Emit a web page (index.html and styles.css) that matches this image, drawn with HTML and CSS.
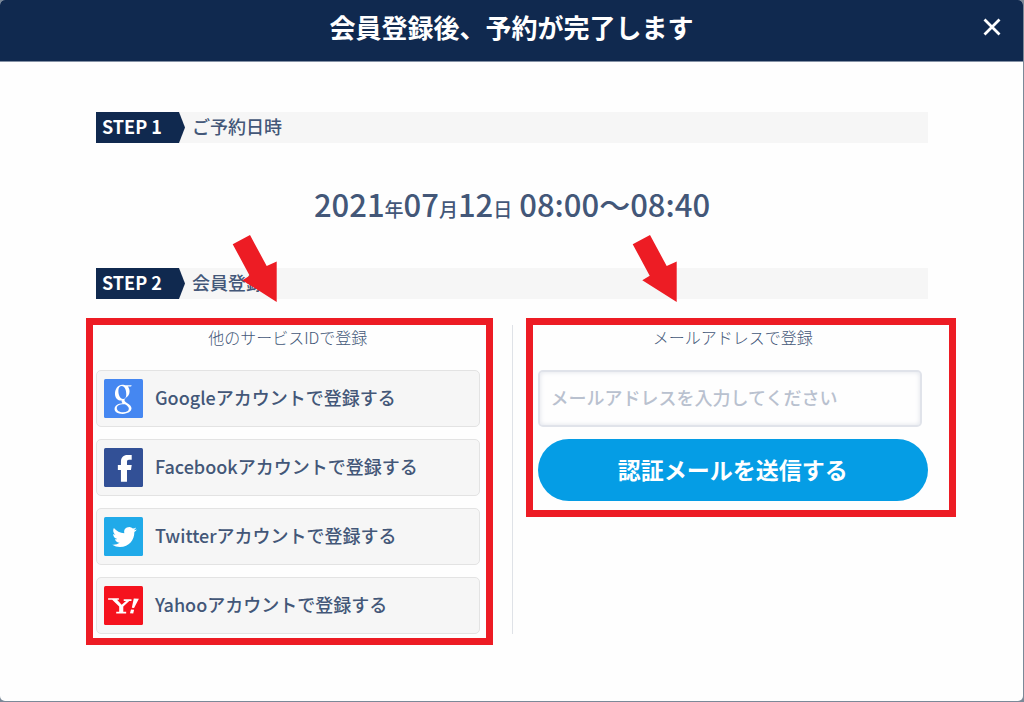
FILE: index.html
```html
<!DOCTYPE html>
<html lang="ja">
<head>
<meta charset="utf-8">
<meta name="viewport" content="width=device-width, initial-scale=1">
<title>会員登録</title>
<link rel="stylesheet" href="styles.css">
</head>
<body>
<main class="modal">
  <header class="modal-header">
    <h1 class="modal-title">会員登録後、予約が完了します</h1>
    <button class="close" type="button" aria-label="閉じる">
      <svg width="18" height="18" viewBox="0 0 18 18"><path d="M1.500 1.500l15 15M16.500 1.500l-15 15" fill="none" stroke="currentColor" stroke-width="2.800"/></svg>
    </button>
  </header>
  <div class="modal-body">
    <h2 class="step"><span class="step-tag">STEP 1</span><span class="step-name">ご予約日時</span></h2>
    <p class="date">2021<small>年</small>07<small>月</small>12<small>日</small> 08:00～08:40</p>
    <h2 class="step"><span class="step-tag">STEP 2</span><span class="step-name">会員登録</span></h2>
    <div class="columns">
      <section class="column column-social">
        <h3 class="column-title">他のサービスIDで登録</h3>
        <div class="socials">
          <button class="social" type="button">
            <svg class="logo" viewBox="0 0 38 38"><rect width="38" height="38" rx="1.500" fill="#4587f1"/><path fill="#fff" fill-rule="evenodd" d="M17.800 5.500c1.600 0 2.700.5 3.700.5H27l-.6 1.400h-3.200c1.100 1.300 1.700 2.800 1.700 4.700 0 3-1.500 4.700-3.200 6-1.400 1.100-1.700 1.700-1.700 2.500 0 1 .8 1.600 2.400 2.700 2.700 1.800 4.400 3.100 4.400 5.300 0 3-3.400 5.400-8.700 5.400-5 0-7.800-1.900-7.800-4.700 0-3.300 3.300-5.300 7.800-5.600-.8-.9-1.100-1.600-.8-2.700-4 .2-6.600-2.500-6.600-6.700 0-5 3.100-8.800 7.100-8.800zM17.300 6.900c-2 0-3.300 1.700-3.300 4.600 0 4.400 1.800 8 4.600 8 2.100 0 3.100-1.800 3.100-4.500 0-4.500-1.600-8.100-4.400-8.100zM19 24.700c-4 0-6.500 1.400-6.500 3.900 0 2.300 2.300 3.900 6.100 3.900 3.600 0 5.600-1.400 5.600-3.500 0-1.800-1.400-2.700-3.800-4.300z"/></svg>
            <span class="social-name">Googleアカウントで登録する</span>
          </button>
          <button class="social" type="button">
            <svg class="logo" viewBox="0 0 38 38"><rect width="38" height="38" rx="1.500" fill="#325096"/><path fill="#fff" d="M16.500 33V21.500h-3v-5h3v-3.200c0-4.300 2.500-6.600 6.300-6.600H27v4.700h-2.700c-1.400 0-1.900.7-1.900 1.900v3.200H27l-.7 5h-3.900V33z"/></svg>
            <span class="social-name">Facebookアカウントで登録する</span>
          </button>
          <button class="social" type="button">
            <svg class="logo" viewBox="0 0 38 38"><rect width="38" height="38" rx="1.500" fill="#20aae9"/><path transform="translate(8 7.500)" fill="#fff" d="M23.953 4.570a10 10 0 01-2.825.775 4.958 4.958 0 002.163-2.723c-.951.555-2.005.959-3.127 1.184a4.920 4.920 0 00-8.384 4.482C7.690 8.095 4.067 6.130 1.640 3.162a4.822 4.822 0 00-.666 2.475c0 1.710.870 3.213 2.188 4.096a4.904 4.904 0 01-2.228-.616v.060a4.923 4.923 0 003.946 4.827 4.996 4.996 0 01-2.212.085 4.936 4.936 0 004.604 3.417 9.867 9.867 0 01-6.102 2.105c-.390 0-.779-.023-1.170-.067a13.995 13.995 0 007.557 2.209c9.053 0 13.998-7.496 13.998-13.985 0-.210 0-.420-.015-.630A9.935 9.935 0 0024 4.590z"/></svg>
            <span class="social-name">Twitterアカウントで登録する</span>
          </button>
          <button class="social" type="button">
            <svg class="logo" viewBox="0 0 38 38"><rect width="38" height="38" rx="1.500" fill="#f5121d"/><path fill="#fff" d="M4 12h10.500v1.500H12.700l4.500 4.800 4.300-3.800h-2.300V13h7.600v1.500h-2.200L18.800 20v5h2.800v1.800h-9.700V25h2.900v-5L8 13.500H4zM29 12.300l5 .2-4.700 9-2.200-.2zM26.300 23l3 .2-.8 3.500-3.200-.2z"/></svg>
            <span class="social-name">Yahooアカウントで登録する</span>
          </button>
        </div>
        <div class="frame frame-social"></div>
        <svg class="arrow arrow-social" viewBox="0 0 45 67"><path d="M.7 9.200L18 0l16.700 31 10-4.500v40.500L10.300 45.200l7.400-4.500z"/></svg>
      </section>
      <div class="divider"></div>
      <form class="column column-mail">
        <label class="column-title" for="mail">メールアドレスで登録</label>
        <input class="mail" id="mail" type="email" placeholder="メールアドレスを入力してください">
        <button class="submit" type="button">認証メールを送信する</button>
        <div class="frame frame-mail"></div>
        <svg class="arrow arrow-mail" viewBox="0 0 45 67"><path d="M.7 9.200L18 0l16.700 31 10-4.500v40.500L10.300 45.200l7.400-4.500z"/></svg>
      </form>
    </div>
  </div>
</main>
</body>
</html>
```
FILE: styles.css
```css
* { box-sizing: border-box; }
body {
  margin: 0;
  background: #7b8998;
  color: #435778;
  font-family: "Noto Sans CJK JP", sans-serif;
  font-weight: 500;
}
h1, h2, h3, p { margin: 0; font-weight: 500; }
button, input { font: inherit; color: inherit; }
button { cursor: pointer; }
.modal {
  margin: 0 1px 1px 0;
  min-height: calc(100vh - 1px);
  background: #fefefe;
  border-radius: 5px;
  overflow: hidden;
}
.modal-header {
  display: flex;
  align-items: center;
  justify-content: center;
  position: relative;
  padding: 7px 60px 14px;
  background: #10294f;
  border-bottom: 1px solid #8491a5;
  color: #fff;
}
.modal-title { font-size: 26px; line-height: 40px; font-weight: 700; }
.close {
  position: absolute;
  right: 18px;
  top: 14px;
  display: flex;
  padding: 4px;
  border: 0;
  background: none;
}
.modal-body { padding: 50px 95px 60px 96px; }
.step {
  display: flex;
  align-items: center;
  background: #f6f6f6;
  font-size: 18px;
  line-height: 29px;
}
.step-tag {
  width: 89px;
  padding: 0 0 2px 6px;
  background: #10294f;
  clip-path: polygon(0 0, 83px 0, 100% 50%, 83px 100%, 0 100%);
  color: #fff;
  font-weight: 700;
}
.step-name { padding: 0 0 2px 7px; }
.date {
  padding: 37px 0 40px;
  font-size: 31px;
  line-height: 48px;
  text-align: center;
}
.date small { font-size: 19px; line-height: 1; }
.columns {
  display: grid;
  grid-template-columns: 1fr 1px 1fr;
  align-items: start;
  margin-top: 26px;
}
.column { position: relative; display: flex; flex-direction: column; }
.column-social { margin-right: 32px; }
.column-mail { margin-left: 25px; }
.divider { align-self: stretch; background: #dfe2e7; }
.column-title {
  margin-bottom: 21px;
  font-size: 16px;
  line-height: 24px;
  font-weight: 300;
  text-align: center;
}
.socials { display: grid; gap: 12px; }
.social {
  display: flex;
  align-items: center;
  gap: 12px;
  height: 57px;
  padding: 0 7px;
  border: 1px solid #e3e3e3;
  border-radius: 5px;
  background: #f6f6f6;
  font-size: 18px;
  text-align: left;
}
.social-name { padding-bottom: 3px; }
.logo { width: 39px; height: 39px; flex: none; }
.mail {
  height: 57px;
  margin: 0 6px 12px 0;
  padding: 0 12px 3px 11px;
  border: 2px solid #e0e3ea;
  border-radius: 5px;
  background: #fefefe;
  box-shadow: inset 0 0 5px #dfe2ea;
  font-size: 18px;
}
.mail::placeholder { color: #b9c1cf; opacity: 1; }
.submit {
  height: 62px;
  padding: 0 24px 3px;
  border: 0;
  border-radius: 31px;
  background: #059de5;
  color: #fff;
  font-size: 23px;
  font-weight: 700;
}
.frame { position: absolute; border: 7px solid #ed1c24; pointer-events: none; }
.frame-social { inset: -7px -13px -11px -10px; }
.frame-mail { inset: -7px -28px -16px -12px; }
.arrow { position: absolute; top: -90px; width: 45px; height: 67px; fill: #ed1c24; }
.arrow-social { left: 136px; }
.arrow-mail { left: 94px; }
```
